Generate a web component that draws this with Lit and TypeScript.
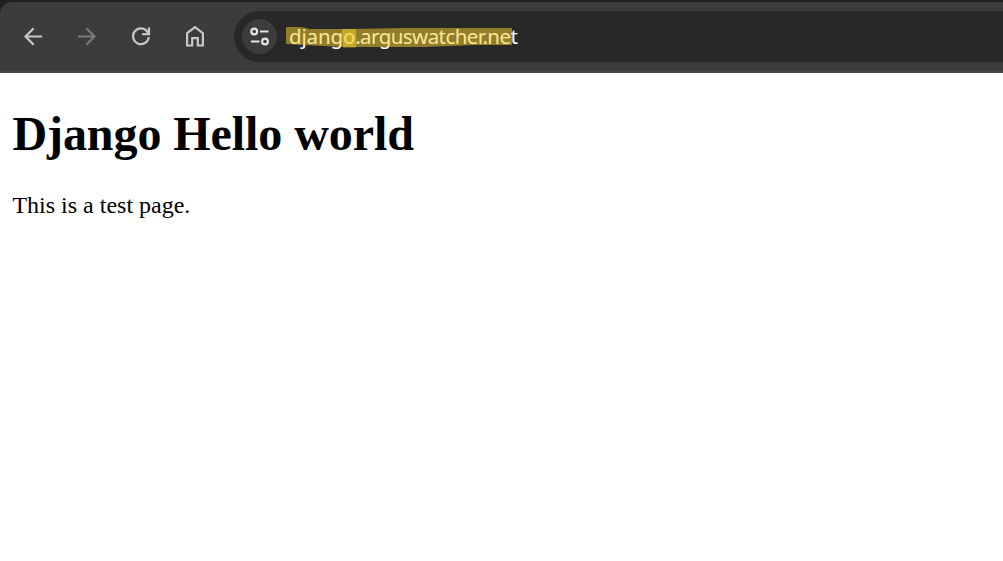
import { LitElement, html, css } from "lit";
import { customElement } from "lit/decorators.js";

@customElement("browser-toolbar")
class BrowserToolbar extends LitElement {
  static styles = css`
    :host { display: block; background: #202121; padding-top: 2px; }
    .bar {
      display: flex; align-items: center; box-sizing: border-box; height: 71px;
      padding: 0 0 0 17px; background: #3c3c3c;
      border-top-left-radius: 12px; border-bottom: 2px solid #474546;
    }
    .nav { display: flex; gap: 22px; color: #c7c7c7; padding-bottom: 1px; }
    .btn { display: block; width: 32px; height: 32px; padding: 0; border: 0; background: none; color: inherit; }
    .btn:disabled { color: #7b7b7b; }
    svg { display: block; fill: none; stroke: currentColor; stroke-width: 2.2; }
    .omnibox {
      display: flex; align-items: center; flex: 1; height: 51px; box-sizing: border-box;
      margin-left: 23px; padding-left: 8px; background: #282828;
      border-radius: 26px 0 0 26px;
    }
    .site { width: 35px; height: 35px; border-radius: 50%; background: #3c3c3c; color: #e3e3e3; }
    .url {
      position: relative; margin: 1px 0 0 12px; padding-bottom: 2px; color: #fff; white-space: nowrap;
      font: 20.5px/28px "Noto Sans", sans-serif; letter-spacing: -0.57px;
    }
    .host { letter-spacing: -0.15px; }
    .marker { position: absolute; left: -4px; top: 0; stroke: none; }
  `;
  render() {
    return html`
      <div class="bar">
        <div class="nav">
          <button class="btn" aria-label="Back">
            <svg width="32" height="32"><path d="M25 16.5H8.8M16.7 8.3L8.5 16.5L16.7 24.7" /></svg>
          </button>
          <button class="btn" aria-label="Forward" disabled>
            <svg width="32" height="32"><path d="M7 16.5H23.2M15.3 8.3L23.5 16.5L15.3 24.7" /></svg>
          </button>
          <button class="btn" aria-label="Reload">
            <svg width="32" height="32"><path d="M23.8 17.2A7.9 7.9 0 1 1 22 11.2L23.6 13.2M24 7.5V14.2H17.2" /></svg>
          </button>
          <button class="btn" aria-label="Home">
            <svg width="32" height="32"><path d="M8.1 13.2L16 7.2L23.9 13.2V25.5H18.8V18.1H13.2V25.5H8.1Z" /></svg>
          </button>
        </div>
        <div class="omnibox">
          <div class="site">
            <svg width="35" height="35"><circle cx="12.2" cy="12.5" r="2.9" /><circle cx="23" cy="22.5" r="2.9" /><path d="M18 12.5H26.5M9 22.5H17.5" /></svg>
          </div>
          <div class="url"><span class="host">django</span>.arguswatcher.net
            <svg class="marker" width="240" height="30">
              <path fill="#fad02d" fill-opacity=".51" d="M1 5L16 5L25 7L66 7L120 6L227 6V23L190 23L140 25L60 25L18 23L1 22Z" />
              <path fill="#fad02d" fill-opacity=".51" d="M57 7H71V25.5H58Z" />
            </svg>
          </div>
        </div>
      </div>
    `;
  }
}

@customElement("app-root")
class AppRoot extends LitElement {
  static styles = css`
    :host { display: block; height: 561px; overflow: hidden; background: #fff; }
    .page { padding: 33px 12px 0 12.4px; color: #000; font-family: "Liberation Serif", serif; }
    .title { margin: 0; font-size: 48px; line-height: 55px; font-weight: 700; letter-spacing: -0.07px; }
    .text { margin: 30px 0 0; font-size: 24px; line-height: 28px; }
  `;
  render() {
    return html`
      <browser-toolbar></browser-toolbar>
      <main class="page">
        <h1 class="title">Django Hello world</h1>
        <p class="text">This is a test page.</p>
      </main>
    `;
  }
}
